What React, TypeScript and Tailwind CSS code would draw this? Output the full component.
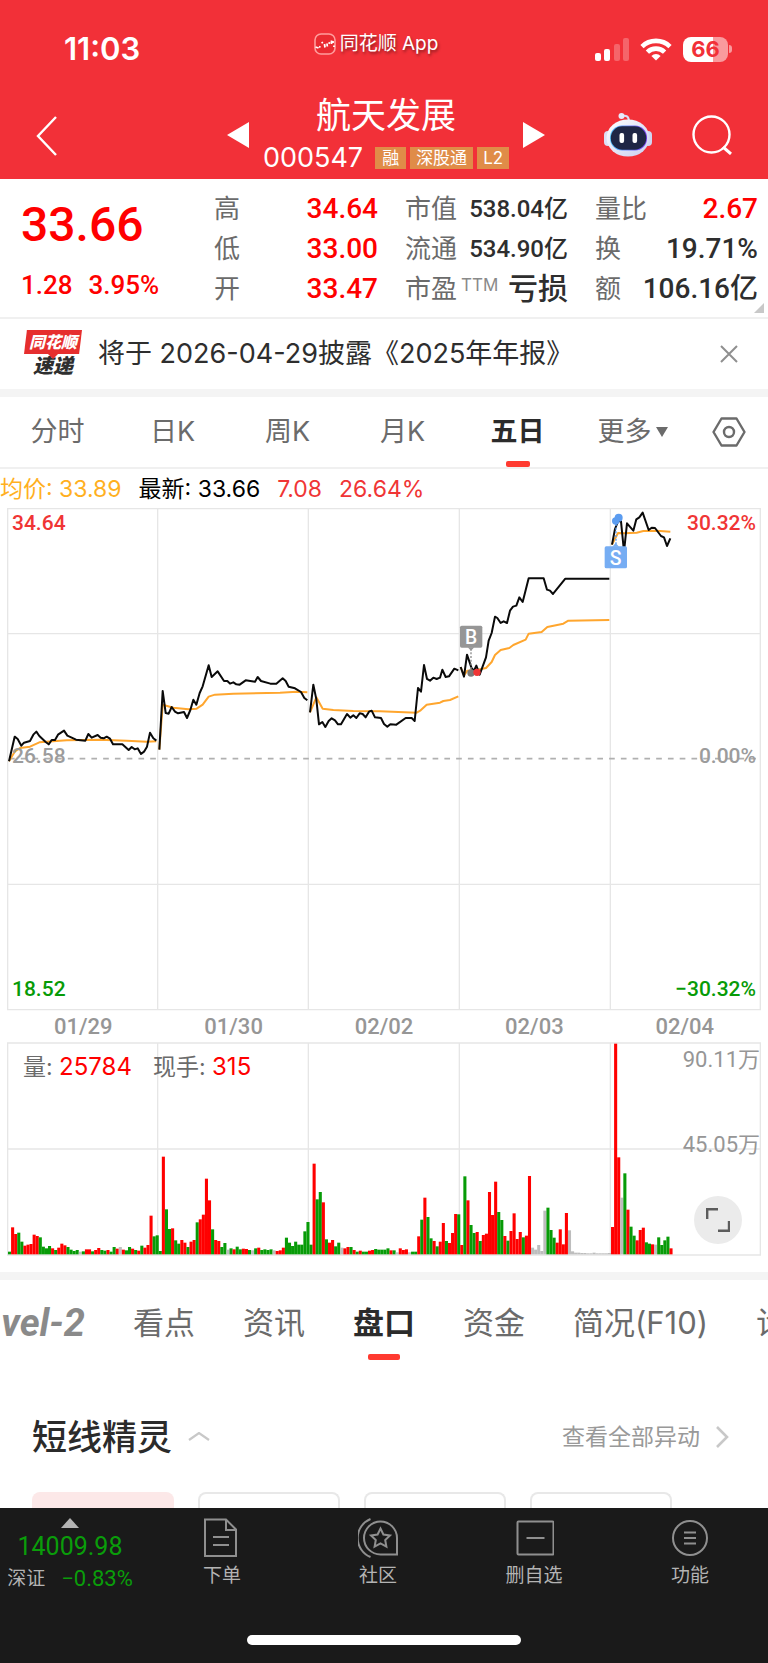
import { useState } from "react";
import clsx from "clsx";

const PRICE_LINES = [
  "27,782 44,708 53,715 64,735 72,726 90,721 100,702 109,693 118,706 137,724 146,731 155,718 165,718 174,702 192,690 202,705 228,717 256,720 265,700 275,711 293,703 302,711 311,713 320,708 330,714 339,731 367,731 386,748 395,739 404,746 413,743 423,760 432,753 441,738 450,696 460,713 469,720",
  "478,747 488,571 497,637 506,639 515,619 525,633 534,638 552,634 561,652 571,628 580,597 589,612 599,577 608,557 626,494 635,529 653,512 672,541 682,541 690,549 700,545 709,551 719,552 737,539 765,543 773,529 783,541 811,549 829,549 848,533 857,541 866,558 885,563 903,574 913,592 922,599",
  "930,635 940,552 949,596 957,671 967,664 976,679 986,661 995,653 1005,659 1014,671 1023,671 1041,640 1051,651 1060,644 1069,652 1079,638 1088,640 1097,650 1107,633 1115,630 1125,650 1143,652 1152,670 1162,678 1171,671 1189,672 1217,652 1235,652 1244,661 1254,562 1263,573 1272,493 1281,535 1290,540 1300,531 1310,535 1320,531 1327,507 1337,529 1347,527 1363,504 1375,509",
  "1382,499 1392,528 1401,462 1415,503 1422,510 1429,495 1439,522 1458,470 1466,420 1475,397 1485,348 1492,352 1502,367 1511,362 1521,367 1530,330 1539,318 1549,315 1558,290 1568,304 1586,233 1631,233 1641,267 1650,270 1659,280 1696,234 1828,234",
  "1836,132 1845,85 1854,62 1863,62 1872,153 1881,68 1900,90 1909,56 1918,50 1928,36 1946,88 1955,81 1965,82 1983,106 1992,110 2001,136 2011,113",
];

const AVERAGE_LINES = [
  "27,782 45,752 60,742 90,738 118,725 200,719 300,717 380,720 440,723 469,722",
  "478,747 488,612 520,621 565,626 590,624 608,612 626,588 645,582 700,579 840,576 890,573 922,575",
  "930,635 949,590 968,624 1000,628 1060,631 1140,632 1250,636 1262,629 1280,612 1320,606 1330,601 1350,598 1375,587",
  "1382,499 1392,524 1402,510 1430,508 1458,502 1475,484 1485,463 1502,448 1528,442 1540,433 1577,417 1586,399 1625,394 1642,379 1690,369 1705,360 1828,358",
  "1836,132 1854,97 1872,98 1910,96 1930,91 1970,90 2011,93",
];

// r = up, g = down, x = flat; the number is the bar height
const VOLUME = (
  "g8 r81 r61 g65 g38 r26 r29 r31 r59 r55 g51 g23 g18 g25 r18 g13 r20 r32 r27 g22 g14 g10 g13 x8 g9 r15 r15 g9 r13 r19 g13 g11 r13 g8 g22 r17 x22 r14 g12 g22 r17 g13 r11 g26 r20 r28 r116 g54 g57 " +
  "g10 r293 g135 g76 r78 g42 g32 r43 r35 g22 r38 r43 g96 r105 r119 r227 r162 g75 r43 r40 g22 g34 x14 g18 r15 g23 g15 r17 r16 g13 x12 g18 r20 g13 g15 g13 g15 x12 r10 r12 r20 g50 g35 g25 g38 g29 g29 g69 g97 " +
  "g29 r272 g165 g187 r156 g45 r35 r43 g24 g35 x20 r18 r22 g22 r13 g8 r11 g8 g8 r11 r13 g16 g14 g14 g14 g18 r12 g12 x6 r18 r13 r15 x6 g8 g8 r54 g104 r170 g112 g48 r40 g24 r38 r94 g40 r34 r64 r121 g120 " +
  "r28 g234 r162 g88 g64 r67 g40 r58 r62 r187 r118 r218 g127 g103 r55 g41 r70 r123 r46 r67 g51 r56 r235 x20 x14 x28 x10 x131 g140 g73 g50 r35 r75 r30 r124 x72 x9 x5 x5 x4 x4 x3 x3 x5 x3 x3 x3 x3 x4 " +
  "r82 r632 r291 x170 g243 r134 g83 g56 r42 r73 r80 g36 g32 r30 x29 g51 g28 g42 g53 r18"
).split(" ");

const BAR_FILL: Record<string, string> = { r: "#ff0000", g: "#079b07", x: "#bdbdbd" };
const BAR_STEP = 9.23;

const DAYS = ["01/29", "01/30", "02/02", "02/03", "02/04"];
const PERIODS = ["分时", "日K", "周K", "月K", "五日", "更多"];
const SECTIONS = ["看点", "资讯", "盘口", "资金", "简况(F10)", "诊股"];

function StatusBar() {
  return (
    <div className="grid h-24 grid-cols-3 items-start pt-8 text-white">
      <span className="pl-16 text-[31px] leading-[34px] font-semibold">11:03</span>
      <div className="flex items-center justify-center gap-1 pr-4">
        <svg viewBox="0 0 22 22" className="h-[22px] w-[22px]">
          <rect x="1" y="1" width="20" height="20" rx="6" fill="#ea2a31" stroke="#ff9c9c" strokeWidth="1.6" />
          <path
            d="M1.500 14l3 1M5 13.500l1.500 .8M7.500 10l1.500-.8M10.500 11l.5 3.500M13 10.500l.3 3M14.500 9.500l1.500 1M17.500 7.500v3.500M19 8v2M20 12.500v1.500"
            stroke="#fff"
            strokeWidth="1.8"
            fill="none"
          />
        </svg>
        <span className="text-[19px] leading-6 [text-shadow:1px_2px_3px_rgba(0,0,0,0.45)]">同花顺 App</span>
      </div>
      <div className="flex h-[34px] items-center justify-end gap-[11px] pr-9">
        <svg viewBox="0 0 34 23" className="h-[23px] w-[34px]" fill="#fff">
          <rect x="0" y="15" width="6" height="8" rx="2" />
          <rect x="9" y="11" width="6" height="12" rx="2" />
          <rect x="19" y="6" width="6" height="17" rx="2" opacity=".25" />
          <rect x="28" y="0" width="6" height="23" rx="2" opacity=".25" />
        </svg>
        <svg viewBox="0 0 32 24" className="h-6 w-8" fill="none" stroke="#fff" strokeWidth="4.6">
          <path d="M2 9.6a20 20 0 0 1 28 0" />
          <path d="M7.4 15.2a12.2 12.2 0 0 1 17.2 0" />
          <path d="M16 23.6l-4.6-4.7a6.6 6.6 0 0 1 9.2 0z" fill="#fff" stroke="none" />
        </svg>
        <div className="flex items-center gap-px">
          <div className="flex h-[25px] w-[45px] items-center justify-center rounded-lg bg-linear-to-r from-white from-66% to-[#f99a9d] to-66% text-[22px] leading-6 font-bold text-[#f23038]">
            66
          </div>
          <div className="h-2 w-[3px] rounded-r-full bg-[#f99a9d]" />
        </div>
      </div>
    </div>
  );
}

function Robot() {
  return (
    <svg viewBox="0 0 48 46" className="h-[46px] w-12">
      <defs>
        <linearGradient id="shell" x1="0" y1="0" x2="1" y2="1">
          <stop offset="0" stopColor="#ffffff" />
          <stop offset="1" stopColor="#c9cff0" />
        </linearGradient>
        <linearGradient id="visor" x1="0" y1="0" x2="1" y2="0">
          <stop offset="0" stopColor="#58c7ff" />
          <stop offset="1" stopColor="#7a3cf0" />
        </linearGradient>
      </defs>
      <path d="M18 4c4-1 7 0 7 6" fill="none" stroke="#d9dcf5" strokeWidth="2" />
      <circle cx="17.5" cy="4" r="3" fill="#e8e9fa" />
      <rect x="0" y="19" width="8" height="15" rx="4" fill="#dcdff5" />
      <rect x="40" y="19" width="8" height="15" rx="4" fill="#d0d4f2" />
      <ellipse cx="24" cy="26" rx="21.5" ry="18.6" fill="url(#shell)" />
      <rect x="6" y="13.500" width="37" height="25" rx="12" fill="url(#visor)" />
      <rect x="6.800" y="14.300" width="35.400" height="23.400" rx="11.500" fill="#1f2645" />
      <rect x="15.500" y="21" width="4.600" height="10" rx="2" fill="#fff" />
      <rect x="28.500" y="21" width="4.600" height="10" rx="2" fill="#fff" />
    </svg>
  );
}

function Header() {
  return (
    <header className="bg-[#f23038]">
      <StatusBar />
      <div className="grid h-[83px] grid-cols-[1fr_auto_1fr] items-start text-white">
        <button aria-label="返回" className="mt-5 ml-9 w-6">
          <svg viewBox="0 0 22 40" className="h-10 w-[22px]" fill="none" stroke="#fff" strokeWidth="2.4">
            <path d="M20 1L2 20l18 19" />
          </svg>
        </button>
        <div className="flex items-start gap-[14px] pl-1">
          <button aria-label="上一只" className="mt-[26px]">
            <svg viewBox="0 0 22 26" className="h-[26px] w-[22px]" fill="#fff">
              <path d="M22 0v26L0 13z" />
            </svg>
          </button>
          <div className="text-center">
            <h1 className="text-[35px] leading-[38px]">航天发展</h1>
            <div className="mt-2 flex items-center gap-1">
              <span className="mr-2 text-[27px] leading-8">000547</span>
              <span className="bg-[#e08c48] px-[7px] text-[17px] leading-[22px]">融</span>
              <span className="bg-[#e08c48] px-[6px] text-[17px] leading-[22px]">深股通</span>
              <span className="bg-[#e08c48] px-[6px] text-[17px] leading-[22px]">L2</span>
            </div>
          </div>
          <button aria-label="下一只" className="mt-[26px]">
            <svg viewBox="0 0 22 26" className="h-[26px] w-[22px]" fill="#fff">
              <path d="M0 0v26l22-13z" />
            </svg>
          </button>
        </div>
        <div className="mt-4 flex items-center justify-end gap-10 pr-9">
          <button aria-label="智能助手">
            <Robot />
          </button>
          <button aria-label="搜索">
            <svg viewBox="0 0 40 40" className="h-10 w-10" fill="none" stroke="#fff" strokeWidth="2.4">
              <circle cx="19.500" cy="19.500" r="18" />
              <path d="M31 32l8 7" strokeWidth="3" />
            </svg>
          </button>
        </div>
      </div>
    </header>
  );
}

const STAT_SIZES = {
  sm: "text-2xl leading-10",
  md: "text-[28px] leading-10",
  lg: "text-3xl leading-10",
};

type StatProps = {
  label: string;
  value: string;
  red?: boolean;
  size?: keyof typeof STAT_SIZES;
  sup?: string;
};

function Stat({ label, value, red, size = "md", sup }: StatProps) {
  return (
    <div className="flex items-center justify-between text-[26px] leading-10 whitespace-nowrap">
      <dt className="flex text-[#6b6b6b]">
        {label}
        {sup && <span className="ml-1 text-[17px] leading-8 text-[#8a8a8a]">{sup}</span>}
      </dt>
      <dd
        className={clsx(
          "font-[family-name:Roboto,'Noto_Sans_CJK_SC',sans-serif] font-medium",
          red ? "text-[#ff0000]" : "text-[#2e2e2e]",
          STAT_SIZES[size],
        )}
      >
        {value}
      </dd>
    </div>
  );
}

function Quote() {
  return (
    <section className="relative grid grid-cols-[1fr_164px_163px_163px] gap-x-[27px] border-b-2 border-[#f0f0f0] pt-[10px] pr-[10px] pb-2 pl-[21px]">
      <div className="font-[family-name:Roboto,'Noto_Sans_CJK_SC',sans-serif] font-medium text-[#ff0000]">
        <div className="pt-1.5 text-5xl leading-[60px]">33.66</div>
        <div className="flex gap-4 pt-3 text-[26px] leading-9">
          <span>1.28</span>
          <span>3.95%</span>
        </div>
      </div>
      <dl>
        <Stat label="高" value="34.64" red />
        <Stat label="低" value="33.00" red />
        <Stat label="开" value="33.47" red />
      </dl>
      <dl>
        <Stat label="市值" value="538.04亿" size="sm" />
        <Stat label="流通" value="534.90亿" size="sm" />
        <Stat label="市盈" sup="TTM" value="亏损" size="lg" />
      </dl>
      <dl>
        <Stat label="量比" value="2.67" red />
        <Stat label="换" value="19.71%" />
        <Stat label="额" value="106.16亿" />
      </dl>
      <svg viewBox="0 0 10 10" className="absolute right-1 bottom-1 h-2.5 w-2.5" fill="#c8c8c8">
        <path d="M10 0v10H0z" />
      </svg>
    </section>
  );
}

function Notice() {
  return (
    <section className="flex h-[70px] items-center bg-white pr-[30px] pl-6">
      <div className="flex w-[58px] flex-col items-center text-center font-black italic">
        <div className="relative w-full">
          <div className="bg-[#e62e2e] text-[16px] leading-6 text-white [clip-path:polygon(5%_0,100%_0,95%_100%,0_100%)]">同花顺</div>
          <svg viewBox="0 0 10 5" className="absolute top-6 left-6 h-[5px] w-2.5" fill="#e62e2e">
            <path d="M0 0h10L5 5z" />
          </svg>
        </div>
        <div className="text-[20px] leading-6 text-[#2e2e2e]">速递</div>
      </div>
      <p className="ml-4 flex-1 text-[27px] leading-9 text-[#2e2e2e]">将于 2026-04-29披露《2025年年报》</p>
      <button aria-label="关闭">
        <svg viewBox="0 0 18 18" className="h-[18px] w-[18px]" stroke="#8f8f8f" strokeWidth="2">
          <path d="M1 1l16 16M17 1L1 17" />
        </svg>
      </button>
    </section>
  );
}

function PeriodTabs() {
  const [active, setActive] = useState("五日");
  return (
    <nav className="grid h-[72px] grid-cols-[repeat(6,115fr)_78fr] border-b-2 border-[#f0f0f0]">
      {PERIODS.map((p) => (
        <button
          key={p}
          onClick={() => setActive(p)}
          className={clsx(
            "relative flex items-center justify-center gap-1 text-[27px] leading-9",
            p === active ? "font-bold text-[#2b2b2b]" : "text-[#6b6b6b]",
          )}
        >
          {p}
          {p === "更多" && (
            <svg viewBox="0 0 12 10" className="h-2.5 w-3" fill="#6b6b6b">
              <path d="M0 0h12L6 10z" />
            </svg>
          )}
          {p === active && <span className="absolute bottom-0 h-1.5 w-6 rounded-xs bg-[#ff3a30]" />}
        </button>
      ))}
      <button aria-label="设置" className="flex items-center justify-center">
        <svg viewBox="0 0 34 30" className="h-[30px] w-[34px]" fill="none" stroke="#6b6b6b" strokeWidth="2.4" strokeLinejoin="round">
          <path d="M9.500 1.500h15L32.500 15l-8 13.500h-15L1.500 15z" />
          <circle cx="17" cy="15" r="5" />
        </svg>
      </button>
    </nav>
  );
}

function PriceChart() {
  return (
    <div className="relative font-[family-name:Roboto,'Noto_Sans_CJK_SC',sans-serif] text-[21px] leading-6 font-medium">
      <svg viewBox="0 22 2304 1508" className="block h-auto w-full" fill="none">
        <g stroke="#e6e6e6" strokeWidth="4">
          <path d="M23 24H2281V1527H23zM23 399H2281M23 1151H2281M473 24V1527M925 24V1527M1378 24V1527M1831 24V1527" />
        </g>
        <path d="M27 774H2281" stroke="#b0b0b0" strokeWidth="5" strokeDasharray="17 18.300" />
        {AVERAGE_LINES.map((points) => (
          <polyline key={points} points={points} stroke="#ffa62e" strokeWidth="6" strokeLinejoin="round" />
        ))}
        {PRICE_LINES.map((points) => (
          <polyline key={points} points={points} stroke="#0a0a0a" strokeWidth="6" strokeLinejoin="round" />
        ))}
        {/* buy marker */}
        <path d="M1413 444V510" stroke="#8c8c8c" strokeWidth="4" strokeDasharray="6 5" />
        <circle cx="1413" cy="517" r="11" fill="#7a7a7a" />
        <circle cx="1431" cy="515" r="11" fill="#f03535" />
        <path d="M1403 440h20l-10 10z" fill="#969696" />
        <rect x="1380" y="375" width="67" height="66" rx="5" fill="#969696" />
        <text x="1413" y="430" fill="#fff" fontSize="58" textAnchor="middle">B</text>
        {/* sell marker */}
        <path d="M1848 70V130" stroke="#5b9cf0" strokeWidth="4" strokeDasharray="6 5" />
        <circle cx="1847" cy="61" r="11" fill="#5b9cf0" />
        <circle cx="1856" cy="51" r="12" fill="#5b9cf0" />
        <path d="M1837 138h20l-10-11z" fill="#76adf3" />
        <rect x="1814" y="137" width="67" height="66" rx="5" fill="#76adf3" />
        <text x="1847" y="192" fill="#fff" fontSize="58" textAnchor="middle">S</text>
      </svg>
      <span className="absolute top-[3px] left-3 text-[#f03535]">34.64</span>
      <span className="absolute top-[3px] right-3 text-[#f03535]">30.32%</span>
      <span className="absolute top-[236px] left-3 text-[#9c9c9c]">26.58</span>
      <span className="absolute top-[236px] right-3 text-[#9c9c9c]">0.00%</span>
      <span className="absolute bottom-[10px] left-3 text-[#079b07]">18.52</span>
      <span className="absolute right-3 bottom-[10px] text-[#079b07]">−30.32%</span>
    </div>
  );
}

function VolumeChart() {
  return (
    <div className="relative text-[22px] leading-6">
      <svg viewBox="0 244 2304 642" className="block h-auto w-full" fill="none">
        <path
          d="M23 247H2281V883H23zM23 565H2281M473 247V883M925 247V883M1378 247V883M1831 247V883"
          stroke="#e6e6e6"
          strokeWidth="4"
        />
        {VOLUME.map((bar, i) => {
          const height = Number(bar.slice(1));
          return (
            <rect key={i} x={24 + i * BAR_STEP} y={881 - height} width={BAR_STEP} height={height} fill={BAR_FILL[bar[0]]} />
          );
        })}
      </svg>
      <div className="absolute top-[13px] left-[23px] flex gap-[21px] text-[23px] text-[#6b6b6b]">
        <span>
          量: <span className="text-2xl leading-6 text-[#ff0000]">25784</span>
        </span>
        <span>
          现手: <span className="text-2xl leading-6 text-[#ff0000]">315</span>
        </span>
      </div>
      <div className="font-[family-name:Roboto,'Noto_Sans_CJK_SC',sans-serif] text-[#969696]">
        <span className="absolute top-[6px] right-2">90.11万</span>
        <span className="absolute top-[91px] right-2">45.05万</span>
      </div>
      <button aria-label="全屏" className="absolute right-[26px] bottom-3 flex h-12 w-12 items-center justify-center rounded-full bg-[#ebebeb]">
        <svg viewBox="0 0 24 24" className="h-6 w-6" fill="none" stroke="#5c5c5c" strokeWidth="2.4">
          <path d="M1.200 11V1.200H12M23 13v9.800H12" />
        </svg>
      </button>
    </div>
  );
}

function SectionTabs() {
  const [active, setActive] = useState("盘口");
  return (
    <nav className="flex h-[92px] gap-12 overflow-hidden border-t-8 border-[#f4f4f4] text-[31px] leading-[86px] whitespace-nowrap text-[#6b6b6b]">
      <button className="flex w-[85px] shrink-0 justify-end font-[family-name:Roboto,sans-serif] text-[38px] leading-[86px] font-bold text-[#8a8a8a] italic">
        vel-2
      </button>
      {SECTIONS.map((s) => (
        <button
          key={s}
          onClick={() => setActive(s)}
          className={clsx("relative flex shrink-0 justify-center", s === active && "font-bold text-[#2b2b2b]")}
        >
          {s}
          {s === active && <span className="absolute bottom-1 h-1.5 w-8 rounded-xs bg-[#ff3a30]" />}
        </button>
      ))}
    </nav>
  );
}

function Signals() {
  return (
    <section className="px-8 pt-[47px]">
      <div className="flex h-[52px] items-center">
        <h2 className="text-[35px] leading-[52px] font-medium text-[#2b2b2b]">短线精灵</h2>
        <button aria-label="收起" className="ml-4">
          <svg viewBox="0 0 22 9" className="h-[9px] w-[22px]" fill="none" stroke="#c8c8c8" strokeWidth="2.200">
            <path d="M1 8l10-7 10 7" />
          </svg>
        </button>
        <a href="#all" className="ml-auto flex items-center gap-4 pr-[7px] text-[23px] leading-8 text-[#999]">
          查看全部异动
          <svg viewBox="0 0 13 22" className="h-[22px] w-[13px]" fill="none" stroke="#c8c8c8" strokeWidth="2.600">
            <path d="M1 1l10 10L1 21" />
          </svg>
        </a>
      </div>
      <div className="mt-[29px] flex h-4 gap-6 overflow-hidden">
        <div className="w-[142px] rounded-t-lg bg-[#fce8e8]" />
        <div className="w-[142px] rounded-t-lg border-2 border-b-0 border-[#e8e8e8]" />
        <div className="w-[142px] rounded-t-lg border-2 border-b-0 border-[#e8e8e8]" />
        <div className="w-[142px] rounded-t-lg border-2 border-b-0 border-[#e8e8e8]" />
      </div>
    </section>
  );
}

const ACTIONS = [
  {
    label: "下单",
    icon: (
      <>
        <path d="M3 1.500h21l10 10V38H3z" />
        <path d="M24 1.500v10.500h10M11 19h16M11 27h16" />
      </>
    ),
  },
  {
    label: "社区",
    icon: (
      <>
        <path d="M22.500 3.500a16.500 16.500 0 0 0 0 33H39V20A16.500 16.500 0 0 0 22.500 3.500z" />
        <path d="M12.500 1a20.500 20.500 0 0 0 0 38" />
        <path d="M22.500 10.500l2.900 6 6.600.9-4.800 4.600 1.200 6.600-5.900-3.200-5.900 3.200 1.200-6.600-4.800-4.600 6.600-.9z" />
      </>
    ),
  },
  {
    label: "删自选",
    icon: (
      <>
        <rect x="3.500" y="3.500" width="36" height="33" rx="1" />
        <path d="M12.500 20h18" />
      </>
    ),
  },
  {
    label: "功能",
    icon: (
      <>
        <circle cx="20" cy="20" r="17" />
        <path d="M14 14.500h12M14 20h12M14 25.500h12" />
      </>
    ),
  },
];

function BottomBar() {
  return (
    <footer className="bg-[#1a1a1a] pb-[18px]">
      <div className="grid h-[111px] grid-cols-[144px_repeat(4,1fr)]">
        <button className="flex flex-col items-center pt-2.5 pr-1 font-[family-name:Roboto,'Noto_Sans_CJK_SC',sans-serif] text-[#0a9d0a]">
          <svg viewBox="0 0 18 10" className="h-2.5 w-[18px]" fill="#b3b3b3">
            <path d="M9 0l9 10H0z" />
          </svg>
          <span className="mt-1 text-[25px] leading-[30px]">14009.98</span>
          <span className="mt-0.5 flex items-center gap-4 text-[22px] leading-[30px]">
            <span className="text-[19px] text-[#b3b3b3]">深证</span>
            <span>−0.83%</span>
          </span>
        </button>
        {ACTIONS.map((a) => (
          <button key={a.label} className="flex flex-col items-center pt-2.5 text-[19px] leading-6 text-[#b3b3b3]">
            <svg viewBox="0 0 40 40" className="h-10 w-10" fill="none" stroke="#8f8f8f" strokeWidth="2">
              {a.icon}
            </svg>
            <span className="mt-1.5">{a.label}</span>
          </button>
        ))}
      </div>
      <div className="mx-auto mt-4 h-2.5 w-[274px] rounded-full bg-white" />
    </footer>
  );
}

export default function App() {
  return (
    <main className="w-full overflow-hidden bg-white font-[family-name:Inter,'Noto_Sans_CJK_SC',sans-serif]">
      <Header />
      <Quote />
      <Notice />
      <div className="h-2 bg-[#f4f4f4]" />
      <PeriodTabs />
      <div className="flex h-[39px] items-center gap-[17px] text-[23px] leading-8">
        <span className="text-[#ffb01f]">均价: 33.89</span>
        <span className="text-black">最新: 33.66</span>
        <span className="text-[#f03535]">7.08</span>
        <span className="text-[#f03535]">26.64%</span>
      </div>
      <PriceChart />
      <div className="mx-2 grid h-[31px] grid-cols-5 text-center font-[family-name:Roboto,sans-serif] text-[22px] leading-8 font-medium text-[#969696]">
        {DAYS.map((d) => (
          <span key={d}>{d}</span>
        ))}
      </div>
      <VolumeChart />
      <div className="h-4" />
      <SectionTabs />
      <Signals />
      <BottomBar />
    </main>
  );
}
